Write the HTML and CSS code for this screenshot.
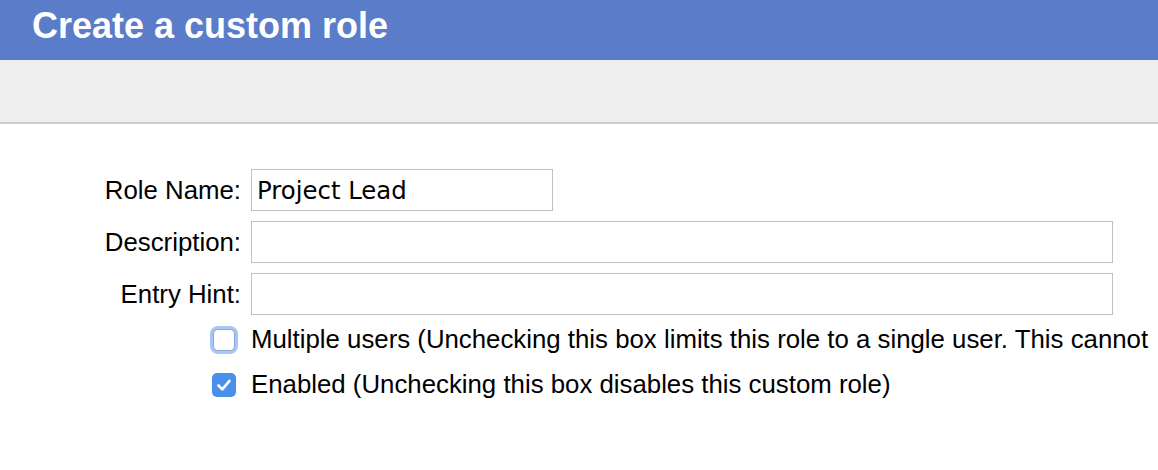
FILE: index.html
```html
<!DOCTYPE html>
<html>
<head>
<meta charset="utf-8">
<title>Create a custom role</title>
<link rel="stylesheet" href="styles.css">
</head>
<body>
<div class="header"><h1 class="title">Create a custom role</h1></div>
<div class="toolbar"></div>
<div class="form">
  <div class="fields">
    <label class="label" for="role-name">Role Name:</label>
    <input class="input input-short" id="role-name" type="text" value="Project Lead">
    <label class="label" for="description">Description:</label>
    <input class="input input-long" id="description" type="text">
    <label class="label" for="entry-hint">Entry Hint:</label>
    <input class="input input-long" id="entry-hint" type="text">
  </div>
  <div class="checks">
    <div class="check-row">
      <span class="checkbox checkbox-focus"></span>
      <span class="check-text">Multiple users (Unchecking this box limits this role to a single user. This cannot</span>
    </div>
    <div class="check-row">
      <span class="checkbox checkbox-on"><svg viewBox="0 0 24 24" width="24" height="24"><path d="M6.5 12.5 L10.3 16.3 L17.5 7.8" fill="none" stroke="#fff" stroke-width="2.6" stroke-linecap="round" stroke-linejoin="round"/></svg></span>
      <span class="check-text">Enabled (Unchecking this box disables this custom role)</span>
    </div>
  </div>
</div>
</body>
</html>
```

FILE: styles.css
```css
html, body {
  margin: 0;
  padding: 0;
  background: #ffffff;
  overflow: hidden;
  font-family: "Liberation Sans", Arial, sans-serif;
  color: #000;
}

.header {
  height: 60px;
  background: #5b7cc8;
  padding-left: 32px;
}

.title {
  margin: 0;
  font-size: 36px;
  font-weight: bold;
  line-height: 52px;
  color: #ffffff;
  white-space: nowrap;
}

.toolbar {
  height: 62px;
  background: #eeeeee;
  border-bottom: 2px solid #cccccc;
}

.form {
  padding-top: 45px;
}

.fields {
  display: grid;
  grid-template-columns: 241px auto;
  column-gap: 10px;
  row-gap: 10px;
  align-items: center;
}

.label {
  justify-self: end;
  font-size: 25.8px;
  white-space: nowrap;
}

.input {
  box-sizing: border-box;
  height: 42px;
  border: 1px solid #c2c2c2;
  border-radius: 0;
  padding: 0 5px;
  margin: 0;
  font-family: "DejaVu Sans", Verdana, sans-serif;
  font-size: 24.4px;
  color: #000;
  background: #fff;
  outline: none;
}

.input-short { width: 302px; }
.input-long { width: 862px; }

.checks {
  margin-top: 2px;
  padding-left: 212px;
}

.check-row {
  height: 45px;
  display: flex;
  align-items: center;
  gap: 16px;
  white-space: nowrap;
}

.check-text {
  font-size: 25.8px;
  line-height: 45px;
}

.checkbox {
  flex: none;
  box-sizing: border-box;
  width: 23px;
  height: 23px;
  border-radius: 5px;
  display: flex;
  align-items: center;
  justify-content: center;
}

.checkbox-focus {
  width: 22px;
  height: 22px;
  margin-left: 1px;
  background: #fff;
  border: 1px solid #8fa6cc;
  box-shadow: 0 0 0 3px #a9c6f2;
}

.checkbox-on {
  width: 24px;
  height: 24px;
  margin-right: -1px;
  background: #4a8fea;
}

.checkbox-on svg {
  display: block;
}
```
